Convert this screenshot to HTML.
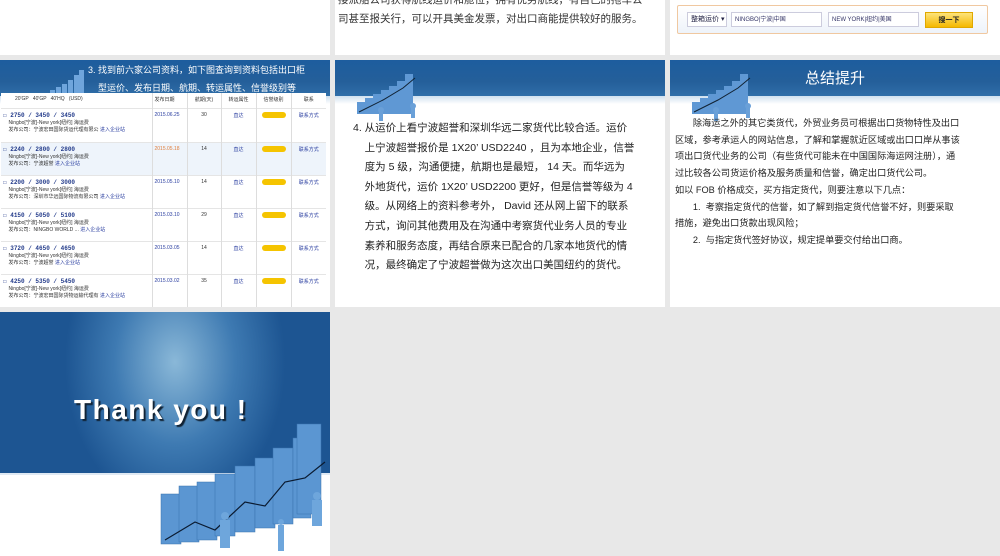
<!DOCTYPE html>
<html><head><meta charset="utf-8"><style>
*{margin:0;padding:0;box-sizing:border-box}
body{width:1000px;height:556px;background:#e8e8e8;position:relative;overflow:hidden;font-family:"Liberation Sans","Noto Sans CJK SC",sans-serif;color:#222}
.s{position:absolute;background:#fff;overflow:hidden}
.hd{position:absolute;left:0;top:0;width:100%;height:36px;background:linear-gradient(#1d5d9e,#245f9a 60%,#2f6ea8);}
.hd2{position:absolute;left:0;top:36px;width:100%;height:8px;background:linear-gradient(#cfe0ef,#fff)}
.t{position:absolute;font-size:10.5px;line-height:19.5px}
table{border-collapse:collapse;font-size:5px;color:#333}
td{border-right:1px solid #ddd;vertical-align:top;padding:3px 2px}
tr{border-bottom:1px solid #e5e5e5}
.n{color:#223a8a;font-weight:bold;font-size:6px;font-family:"Liberation Mono",monospace}
.lk{color:#2a3ea0}
.bd{display:inline-block;width:24px;height:6px;background:#f5c400;border-radius:3px}
</style></head><body>

<!-- row1 -->
<div class="s" style="left:0;top:0;width:330px;height:55px"></div>
<div class="s" style="left:335px;top:0;width:330px;height:55px">
<div class="t" style="left:3px;top:-9px;font-size:10.5px;line-height:19px;color:#333;white-space:nowrap">接派船公司获得航线运价和舱位，拥有优势航线，有自己的拖车公<br>司甚至报关行，可以开具美金发票，对出口商能提供较好的服务。</div>
</div>
<div class="s" style="left:670px;top:0;width:330px;height:55px">
<div style="position:absolute;left:7px;top:5px;width:311px;height:29px;border:1px solid #f0c8a0;background:linear-gradient(#fff,#eef3fa);border-radius:2px"></div>
<div style="position:absolute;left:17px;top:12px;width:40px;height:15px;border:1px solid #ccd;background:#fff;font-size:7px;color:#224;line-height:14px;padding-left:3px">整箱运价 ▾</div>
<div style="position:absolute;left:61px;top:12px;width:91px;height:15px;border:1px solid #ccd;background:#fff;font-size:6px;color:#336;line-height:14px;padding-left:3px">NINGBO|宁波|中国</div>
<div style="position:absolute;left:158px;top:12px;width:91px;height:15px;border:1px solid #ccd;background:#fff;font-size:6px;color:#336;line-height:14px;padding-left:3px">NEW YORK|纽约|美国</div>
<div style="position:absolute;left:255px;top:12px;width:48px;height:16px;background:linear-gradient(#fde37a,#f5b800);border:1px solid #e0a800;font-size:7px;text-align:center;line-height:15px;font-weight:bold">搜一下</div>
</div>

<!-- row2 slide1 -->
<div class="s" style="left:0;top:60px;width:330px;height:247px">
<div class="hd"></div><div class="hd2"></div>
<svg style="position:absolute;left:48px;top:8px" width="38" height="30" viewBox="0 0 38 30"><g fill="#6fa5dc"><rect x="2" y="22" width="5" height="6"/><rect x="8" y="19" width="5" height="9"/><rect x="14" y="16" width="5" height="12"/><rect x="20" y="12" width="5" height="16"/><rect x="26" y="7" width="5" height="21"/><rect x="31" y="2" width="5" height="26"/></g></svg>
<div style="position:absolute;left:1px;top:33px;width:325px;height:214px;background:#fff">
<table style="width:325px">
<tr style="height:15px"><td style="width:151px;padding-left:14px">20'GP &nbsp;&nbsp;40'GP &nbsp;&nbsp;40'HQ &nbsp;&nbsp;(USD)</td><td style="width:35px">发布日期</td><td style="width:34px;text-align:center">航期(天)</td><td style="width:35px;text-align:center">转运属性</td><td style="width:35px;text-align:center">信誉级别</td><td style="text-align:center;border:0">联系</td></tr>
<tr style="height:34px"><td><span class="n">☐ 2750 / 3450 / 3450</span><br>&nbsp;&nbsp;&nbsp;&nbsp;Ningbo[宁波]-New york[纽约] 海运费<br>&nbsp;&nbsp;&nbsp;&nbsp;发布公司：宁波宏田国际货运代理有限公 <span class="lk">进入企业站</span></td><td class="lk">2015.06.25</td><td style="text-align:center">30</td><td class="lk" style="text-align:center">直达</td><td style="text-align:center"><span class="bd"></span></td><td class="lk" style="text-align:center;border:0">联系方式</td></tr>
<tr style="height:33px;background:#eef4fb"><td><span class="n">☐ 2240 / 2800 / 2800</span><br>&nbsp;&nbsp;&nbsp;&nbsp;Ningbo[宁波]-New york[纽约] 海运费<br>&nbsp;&nbsp;&nbsp;&nbsp;发布公司：宁波超誉 <span class="lk">进入企业站</span></td><td style="color:#e08040">2015.05.18</td><td style="text-align:center">14</td><td class="lk" style="text-align:center">直达</td><td style="text-align:center"><span class="bd"></span></td><td class="lk" style="text-align:center;border:0">联系方式</td></tr>
<tr style="height:33px"><td><span class="n">☐ 2200 / 3000 / 3000</span><br>&nbsp;&nbsp;&nbsp;&nbsp;Ningbo[宁波]-New york[纽约] 海运费<br>&nbsp;&nbsp;&nbsp;&nbsp;发布公司：深圳市华远国际物流有限公司 <span class="lk">进入企业站</span></td><td class="lk">2015.05.10</td><td style="text-align:center">14</td><td class="lk" style="text-align:center">直达</td><td style="text-align:center"><span class="bd"></span></td><td class="lk" style="text-align:center;border:0">联系方式</td></tr>
<tr style="height:33px"><td><span class="n">☐ 4150 / 5050 / 5100</span><br>&nbsp;&nbsp;&nbsp;&nbsp;Ningbo[宁波]-New york[纽约] 海运费<br>&nbsp;&nbsp;&nbsp;&nbsp;发布公司：NINGBO WORLD ... <span class="lk">进入企业站</span></td><td class="lk">2015.03.10</td><td style="text-align:center">29</td><td class="lk" style="text-align:center">直达</td><td style="text-align:center"><span class="bd"></span></td><td class="lk" style="text-align:center;border:0">联系方式</td></tr>
<tr style="height:33px"><td><span class="n">☐ 3720 / 4650 / 4650</span><br>&nbsp;&nbsp;&nbsp;&nbsp;Ningbo[宁波]-New york[纽约] 海运费<br>&nbsp;&nbsp;&nbsp;&nbsp;发布公司：宁波超誉 <span class="lk">进入企业站</span></td><td class="lk">2015.03.05</td><td style="text-align:center">14</td><td class="lk" style="text-align:center">直达</td><td style="text-align:center"><span class="bd"></span></td><td class="lk" style="text-align:center;border:0">联系方式</td></tr>
<tr style="height:33px;border:0"><td><span class="n">☐ 4250 / 5350 / 5450</span><br>&nbsp;&nbsp;&nbsp;&nbsp;Ningbo[宁波]-New york[纽约] 海运费<br>&nbsp;&nbsp;&nbsp;&nbsp;发布公司：宁波宏田国际货物运输代理有 <span class="lk">进入企业站</span></td><td class="lk">2015.03.02</td><td style="text-align:center">35</td><td class="lk" style="text-align:center">直达</td><td style="text-align:center"><span class="bd"></span></td><td class="lk" style="text-align:center;border:0">联系方式</td></tr>
</table></div>
<div class="t" style="left:88px;top:1px;color:#fff;font-size:9px;line-height:18px;z-index:2">3. 找到前六家公司资料，如下图查询到资料包括出口柜<br>&nbsp;&nbsp;&nbsp;&nbsp;型运价、发布日期、航期、转运属性、信誉级别等</div>
</div>

<!-- row2 slide2 -->
<div class="s" style="left:335px;top:60px;width:330px;height:247px">
<div class="hd"></div><div class="hd2"></div>
<svg style="position:absolute;left:18px;top:10px" width="70" height="52" viewBox="0 0 70 52"><g fill="#5f98d4"><rect x="4" y="32" width="8" height="12"/><rect x="12" y="28" width="8" height="16"/><rect x="20" y="24" width="8" height="20"/><rect x="28" y="20" width="8" height="24"/><rect x="36" y="16" width="8" height="28"/><rect x="44" y="11" width="8" height="33"/><rect x="52" y="4" width="8" height="40"/></g><path d="M6 42 L30 30 L50 18 L62 8" stroke="#123" stroke-width="1" fill="none"/><g fill="#6aa0d8"><circle cx="28" cy="40" r="3"/><rect x="26" y="42" width="4" height="9"/><circle cx="60" cy="36" r="3"/><rect x="58" y="38" width="4" height="10"/></g></svg>
<div class="t" style="left:18px;top:59px;width:300px;font-size:10.5px;line-height:19.6px;color:#222">4. 从运价上看宁波超誉和深圳华远二家货代比较合适。运价<br>&nbsp;&nbsp;&nbsp;&nbsp;上宁波超誉报价是 1X20’ USD2240 ，且为本地企业，信誉<br>&nbsp;&nbsp;&nbsp;&nbsp;度为 5 级，沟通便捷，航期也是最短， 14 天。而华远为<br>&nbsp;&nbsp;&nbsp;&nbsp;外地货代，运价 1X20’ USD2200 更好，但是信誉等级为 4<br>&nbsp;&nbsp;&nbsp;&nbsp;级。从网络上的资料参考外， David 还从网上留下的联系<br>&nbsp;&nbsp;&nbsp;&nbsp;方式，询问其他费用及在沟通中考察货代业务人员的专业<br>&nbsp;&nbsp;&nbsp;&nbsp;素养和服务态度，再结合原来已配合的几家本地货代的情<br>&nbsp;&nbsp;&nbsp;&nbsp;况，最终确定了宁波超誉做为这次出口美国纽约的货代。</div>
</div>

<!-- row2 slide3 -->
<div class="s" style="left:670px;top:60px;width:330px;height:247px">
<div class="hd"></div><div class="hd2"></div>
<div style="position:absolute;left:135px;top:7px;color:#fff;font-size:15px">总结提升</div>
<svg style="position:absolute;left:18px;top:10px" width="70" height="52" viewBox="0 0 70 52"><g fill="#5f98d4"><rect x="4" y="32" width="8" height="12"/><rect x="12" y="28" width="8" height="16"/><rect x="20" y="24" width="8" height="20"/><rect x="28" y="20" width="8" height="24"/><rect x="36" y="16" width="8" height="28"/><rect x="44" y="11" width="8" height="33"/><rect x="52" y="4" width="8" height="40"/></g><path d="M6 42 L30 30 L50 18 L62 8" stroke="#123" stroke-width="1" fill="none"/><g fill="#6aa0d8"><circle cx="28" cy="40" r="3"/><rect x="26" y="42" width="4" height="9"/><circle cx="60" cy="36" r="3"/><rect x="58" y="38" width="4" height="10"/></g></svg>
<div class="t" style="left:5px;top:55px;width:322px;font-size:9.2px;line-height:16.7px;color:#222">&nbsp;&nbsp;&nbsp;&nbsp;&nbsp;&nbsp;&nbsp;除海运之外的其它类货代，外贸业务员可根据出口货物特性及出口<br>区域，参考承运人的网站信息，了解和掌握就近区域或出口口岸从事该<br>项出口货代业务的公司（有些货代可能未在中国国际海运网注册），通<br>过比较各公司货运价格及服务质量和信誉，确定出口货代公司。<br>如以 FOB 价格成交，买方指定货代，则要注意以下几点：<br>&nbsp;&nbsp;&nbsp;&nbsp;&nbsp;&nbsp;&nbsp;1.&nbsp;&nbsp;考察指定货代的信誉，如了解到指定货代信誉不好，则要采取<br>措施，避免出口货款出现风险；<br>&nbsp;&nbsp;&nbsp;&nbsp;&nbsp;&nbsp;&nbsp;2.&nbsp;&nbsp;与指定货代签好协议，规定提单要交付给出口商。</div>
</div>

<!-- row3 thank you -->
<div class="s" style="left:0;top:312px;width:330px;height:244px;background:linear-gradient(#e3ebf5,#fff 45%)">
<div style="position:absolute;left:0;top:0;width:330px;height:161px;background:radial-gradient(ellipse 110px 150px at 175px 50px,#8ab8d8,#3e7ab2 55%,#1d5592 100%)"></div>
<div style="position:absolute;left:0;top:161px;width:330px;height:2px;background:#dfe9f3"></div>
<div style="position:absolute;left:74px;top:82px;color:#fff;font-size:28px;font-weight:bold;letter-spacing:1.5px;text-shadow:2px 2px 1px #123">Thank you !</div>
<svg style="position:absolute;left:155px;top:110px" width="175" height="134" viewBox="0 0 175 134"><g fill="#5b96d2" stroke="#3b72ae" stroke-width="0.5"><rect x="6" y="72" width="20" height="50"/><rect x="24" y="64" width="20" height="56"/><rect x="42" y="60" width="20" height="58"/><rect x="60" y="52" width="20" height="62"/><rect x="80" y="44" width="20" height="66"/><rect x="100" y="36" width="20" height="70"/><rect x="118" y="26" width="20" height="76"/><rect x="138" y="16" width="18" height="80"/><rect x="142" y="2" width="24" height="90"/></g><path d="M10 118 L40 100 L60 108 L90 80 L110 84 L130 60 L150 56 L170 40" stroke="#0a1a30" stroke-width="1.2" fill="none"/><g fill="#6ea6dc"><circle cx="70" cy="94" r="4"/><rect x="65" y="98" width="10" height="28"/><circle cx="126" cy="100" r="3"/><rect x="123" y="103" width="6" height="26"/><circle cx="162" cy="74" r="4"/><rect x="157" y="78" width="10" height="26"/></g></svg>
</div>

</body></html>
